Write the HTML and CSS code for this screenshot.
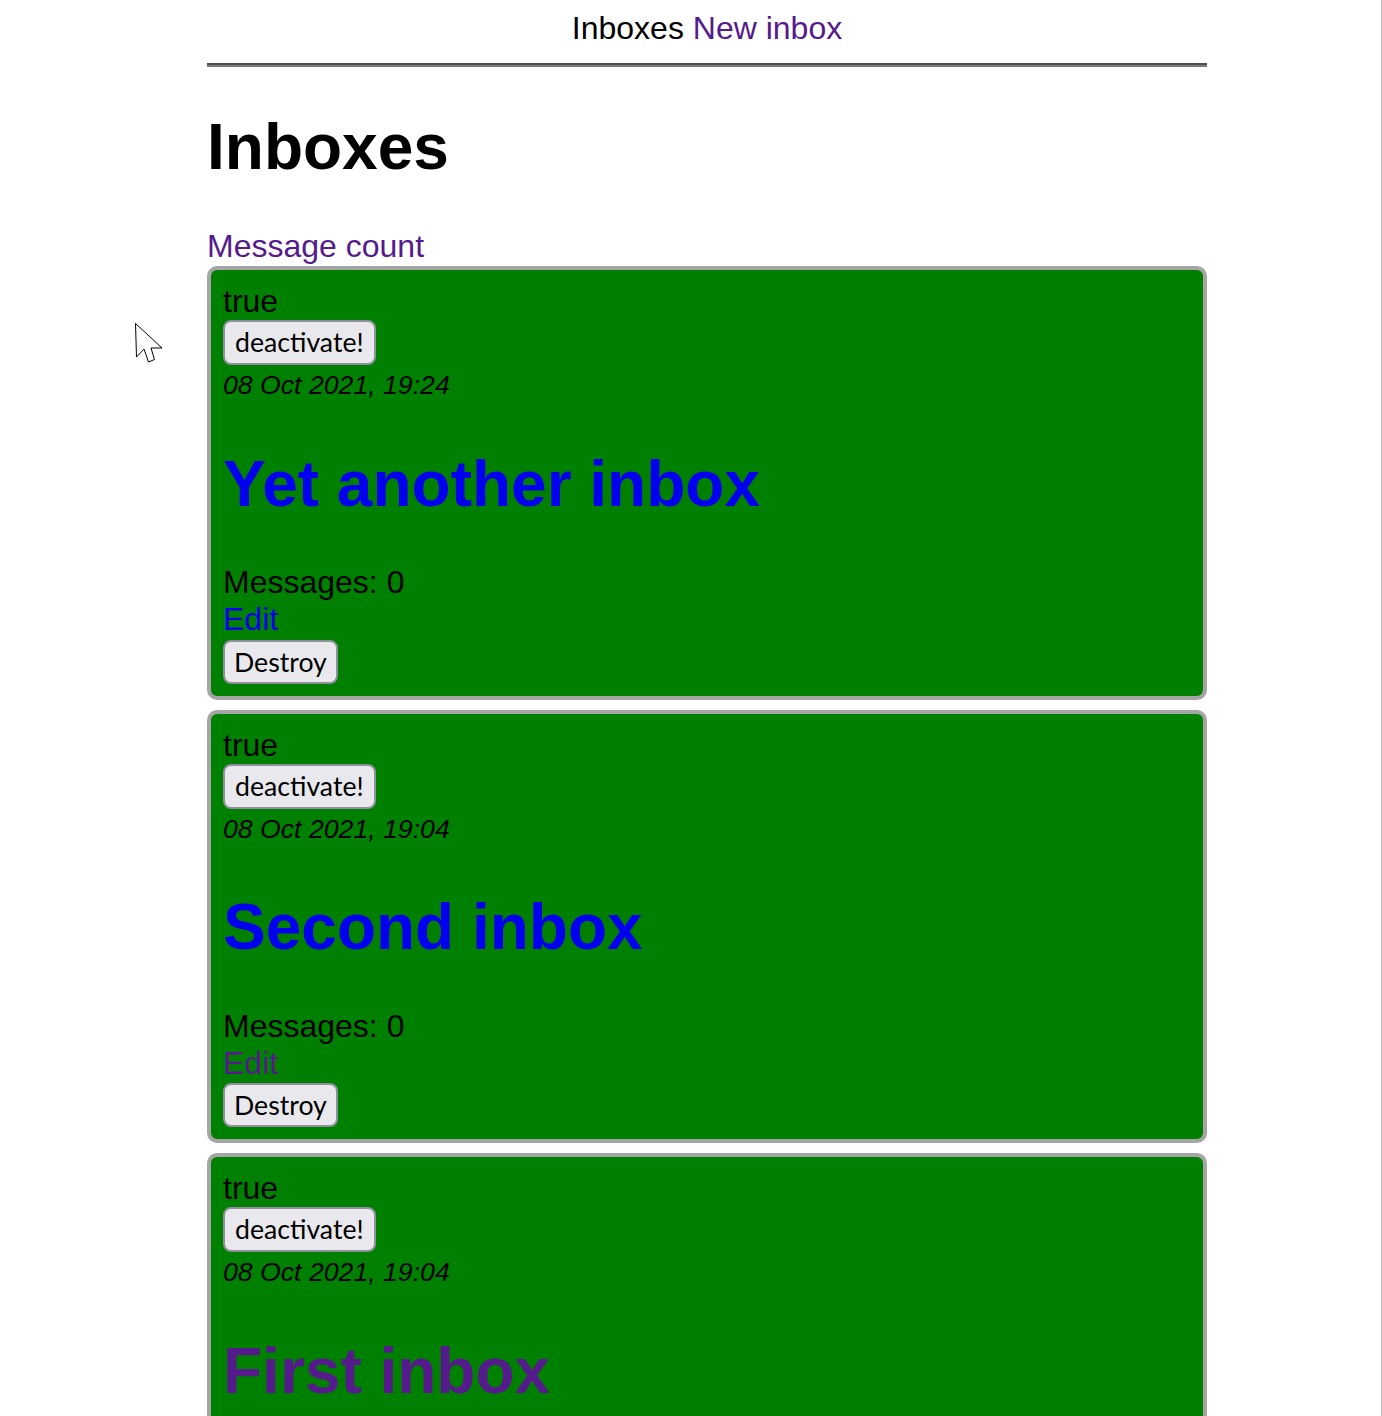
FILE: index.html
```html
<!DOCTYPE html>
<html>
<head>
<meta charset="utf-8">
<title>Inboxes</title>
<link rel="stylesheet" href="styles.css">
</head>
<body>
<div class="page">
  <nav class="nav"><span>Inboxes</span> <a class="visited" href="#">New inbox</a></nav>
  <hr class="rule">
  <h1 class="title">Inboxes</h1>
  <a class="visited count-link" href="#">Message count</a>

  <div class="card">
    <div class="line">true</div>
    <button class="btn">deactivate!</button>
    <div class="line"><small class="date">08 Oct 2021, 19:24</small></div>
    <h1 class="card-title"><a class="link" href="#">Yet another inbox</a></h1>
    <div class="line msgs">Messages: 0</div>
    <div class="line"><a class="link" href="#">Edit</a></div>
    <button class="btn btn-destroy">Destroy</button>
  </div>

  <div class="card">
    <div class="line">true</div>
    <button class="btn">deactivate!</button>
    <div class="line"><small class="date">08 Oct 2021, 19:04</small></div>
    <h1 class="card-title"><a class="link" href="#">Second inbox</a></h1>
    <div class="line msgs">Messages: 0</div>
    <div class="line"><a class="visited" href="#">Edit</a></div>
    <button class="btn btn-destroy">Destroy</button>
  </div>

  <div class="card">
    <div class="line">true</div>
    <button class="btn">deactivate!</button>
    <div class="line"><small class="date">08 Oct 2021, 19:04</small></div>
    <h1 class="card-title"><a class="visited" href="#">First inbox</a></h1>
    <div class="line msgs">Messages: 0</div>
    <div class="line"><a class="visited" href="#">Edit</a></div>
    <button class="btn btn-destroy">Destroy</button>
  </div>
</div>

<div class="edge"></div>
<svg class="cursor" width="30" height="42" viewBox="0 0 30 42">
  <path d="M1.5 1.5 L2.5 35 L10 27 L14.5 40 L20.5 37.5 L17 26 L28 26 Z" fill="#fff" stroke="#000" stroke-width="1" stroke-linejoin="miter"/>
</svg>
</body>
</html>
```
FILE: styles.css
```css
html, body {
  margin: 0;
  padding: 0;
  background: #fff;
}
body {
  font-family: "Liberation Sans", Arial, sans-serif;
  font-size: 32px;
  color: #000;
  overflow: hidden;
}
.page {
  width: 1000px;
  margin-left: 207px;
  padding-top: 10px;
}
.nav {
  text-align: center;
}
a {
  text-decoration: none;
}
.link {
  color: #0000ee;
}
.visited {
  color: #551a8b;
}
.rule {
  margin: 16px 0;
  height: 0;
  border: 0;
  border-top: 2px solid #505050;
  border-bottom: 2px solid #7a7a7a;
}
.title {
  font-size: 64px;
  font-weight: bold;
  margin: 42.88px 0;
}
.count-link {
  display: block;
  padding-top: 1px;
}
.card {
  margin-top: 1px;
  margin-bottom: 10px;
  border: 4px solid #a5a5a5;
  border-radius: 10px;
  background: #008000;
  padding: 13px 12px 12px 12px;
}
.line {
  line-height: normal;
}
.card > .line:first-child {
  line-height: 37px;
}
.date {
  font-size: 26.67px;
  font-style: italic;
}
.card-title {
  font-size: 64px;
  font-weight: bold;
  margin: 44.88px 0 42.38px 0;
}
.msgs {
  line-height: 38px;
}
.btn {
  display: block;
  font-family: Lato, "Noto Sans", sans-serif;
  font-size: 26.67px;
  line-height: 37px;
  color: #000;
  background: #e9e9ed;
  border: 2px solid #8f8f9d;
  border-radius: 8px;
  padding: 2px 10px;
  margin: 0;
}
.btn-destroy {
  line-height: 36px;
  padding: 2px 9px;
  margin-top: 1.5px;
}
.edge {
  position: absolute;
  top: 0;
  left: 1381px;
  width: 1px;
  height: 1416px;
  background: #c4c4c4;
}
.cursor {
  position: absolute;
  left: 134px;
  top: 322px;
}
```
